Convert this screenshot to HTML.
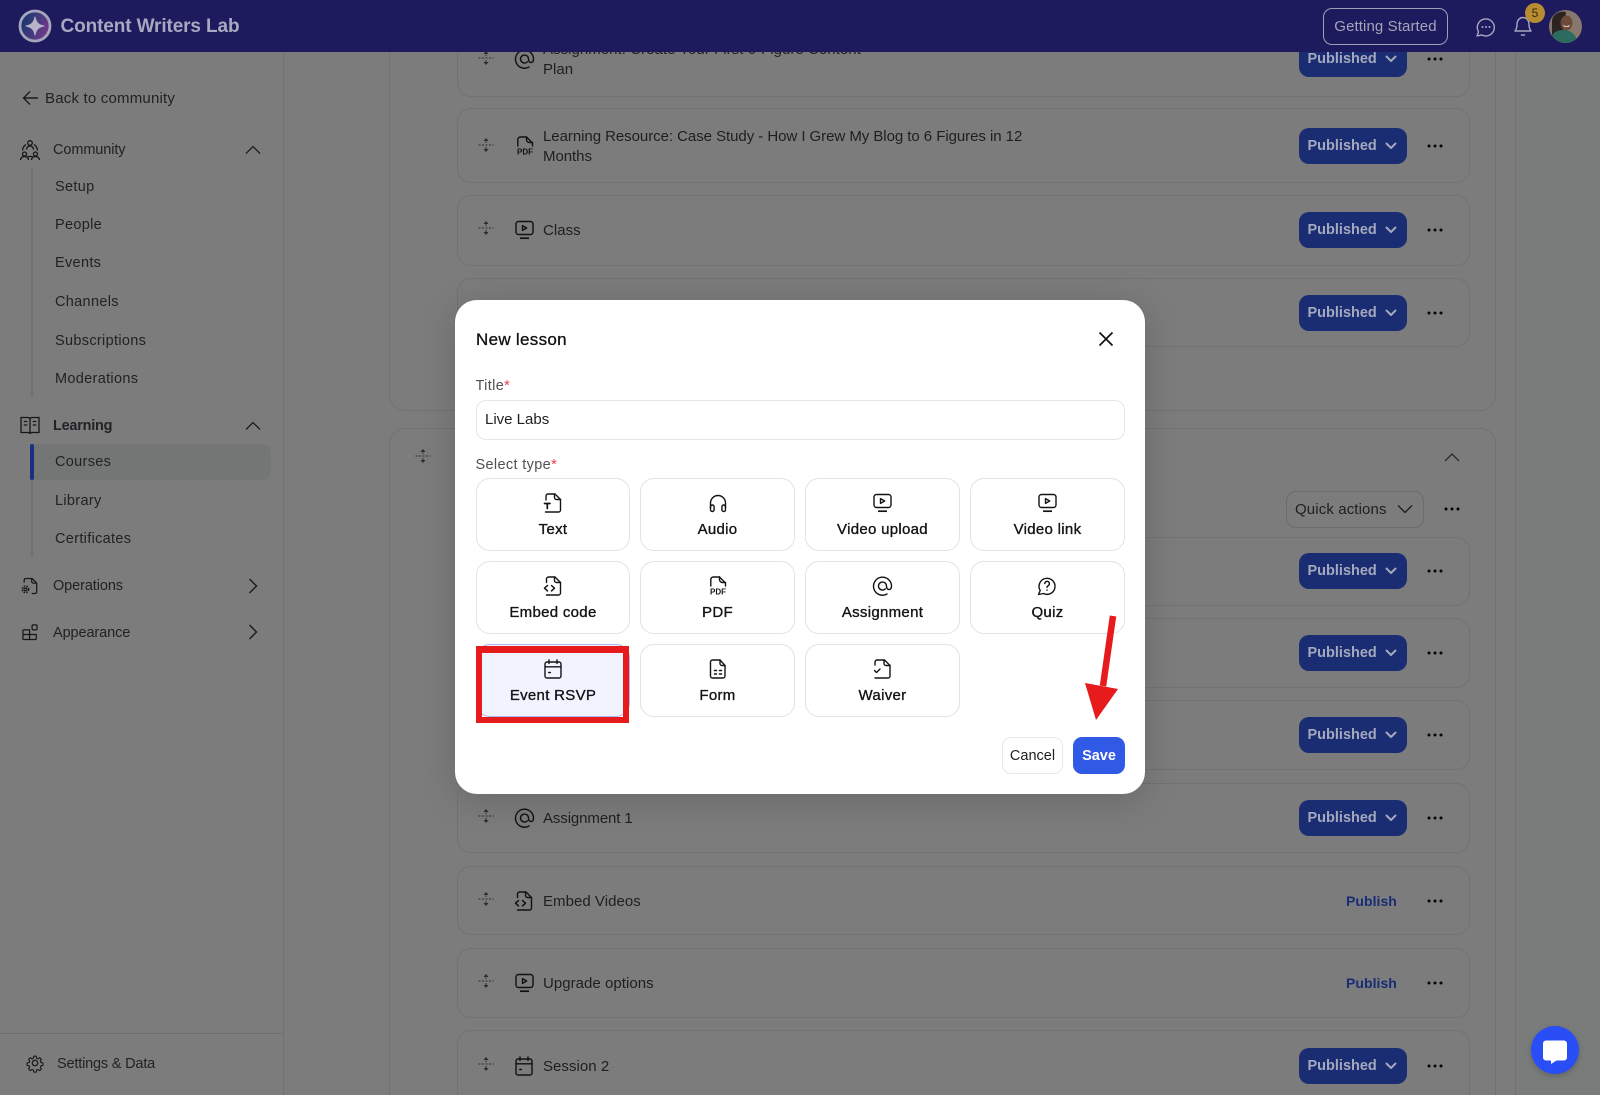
<!DOCTYPE html>
<html lang="en"><head><meta charset="utf-8"><title>New lesson</title>
<style>
*{box-sizing:border-box;margin:0;padding:0}
html,body{width:1600px;height:1095px;overflow:hidden;background:#7c7c7c;font-family:"Liberation Sans",sans-serif}
.a{position:absolute}
#page{position:relative;width:1600px;height:1095px;overflow:hidden;background:#7c7c7c}
#rightpane{left:1515px;top:52px;width:85px;height:1043px;background:#7a7c7c;border-left:1px solid #727272}
#side{left:0;top:52px;width:284px;height:1043px;background:#7c7c7c;border-right:1px solid #727272}
.sec{border:1px solid #727272;border-radius:16px}
.card{position:absolute;left:457px;width:1013px;border:1px solid #727272;border-radius:14px}
.r{position:absolute;left:0;width:1600px;height:0}
.r>*{position:absolute}
.r .d{left:478px;top:-12px;color:#2c2c2e}
.r .i{left:512.500px;top:-12px;color:#111}
.r .t{left:543px;top:-9px;font-size:15px;line-height:20px;color:#1f1f22;letter-spacing:.04px;white-space:nowrap}
.r .p{left:1299px;top:-18px;width:108px;height:36px;border-radius:10px;background:#1a2c72;color:#a4a9bd;font-size:14.500px;font-weight:700;line-height:37px;padding-left:8.500px}
.r .p svg{position:absolute;left:86px;top:12px}
.r .u{left:1346px;top:-10px;font-size:14px;line-height:20px;font-weight:700;color:#182c76;letter-spacing:.05px}
.r .m{left:1427px;top:-2px}
.s{position:absolute;font-size:15px;line-height:20px;color:#222226;white-space:nowrap;letter-spacing:.32px}
.h{letter-spacing:-.1px}
#modal{left:455px;top:300px;width:690px;height:494px;background:#fff;border-radius:22px;box-shadow:0 6px 40px rgba(0,0,0,.16)}
.o{position:absolute;width:155px;height:73px;border:1px solid #e1e2e6;border-radius:14px;background:#fff;color:#141416}
.o svg{position:absolute;left:65px;top:12px}
.o b{position:absolute;left:0;right:0;top:41px;text-align:center;font-size:15px;line-height:20px;font-weight:400;letter-spacing:.3px;-webkit-text-stroke:.35px #141416}
</style></head><body>
<svg width="0" height="0" style="position:absolute">
<defs>
<symbol id="video" viewBox="0 0 24 24"><g fill="none" stroke="currentColor" stroke-width="1.4" stroke-linejoin="round" transform="translate(-.5 0)"><rect x="3.500" y="3.500" width="17" height="13" rx="2.500"/><path d="M10 7.600v4.800l4.200-2.400z"/><path d="M7.500 20.200h9" stroke-width="1.700"/></g></symbol>
<symbol id="at" viewBox="0 0 24 24"><g fill="none" stroke="currentColor" stroke-width="1.4" stroke-linecap="round"><path d="M16.500 20a9 9 0 1 1 4.500-8c0 2.200-1 3.500-2.500 3.500S16 14.200 16 12a4 4 0 1 0-1.200 2.900" transform="translate(-.5 0)"/></g></symbol>
<symbol id="quiz" viewBox="0 0 24 24"><g fill="none" stroke="currentColor" stroke-width="1.4" stroke-linecap="round" stroke-linejoin="round" transform="translate(-1 0)"><path d="M3.500 20.500l1.700-4a8 8 0 1 1 3.300 3z"/><path d="M9.800 9.600a2.300 2.300 0 1 1 3.500 2c-.9.500-1.300 1-1.300 1.800"/><path d="M12 16v.1"/></g></symbol>
<symbol id="cal" viewBox="0 0 24 24"><g fill="none" stroke="currentColor" stroke-width="1.4" stroke-linecap="round" transform="translate(-1 0)"><rect x="4" y="5" width="16" height="16" rx="2"/><path d="M4 9.800h16M8 3v3.500M16 3v3.500"/><path d="M7.800 15.500h1.500" stroke-width="1.600"/></g></symbol>
<symbol id="text" viewBox="0 0 24 24"><g fill="none" stroke="currentColor" stroke-width="1.4" stroke-linecap="round" stroke-linejoin="round" transform="translate(-1.500 0)"><path d="M5.500 9V5a2 2 0 0 1 2-2h7l5.500 5.500V19a2 2 0 0 1-2 2H5"/><path d="M14 3v3.500a2 2 0 0 0 2 2h4"/><path d="M4 12.500h5.500M6.800 12.500v5" stroke-width="1.700"/></g></symbol>
<symbol id="audio" viewBox="0 0 24 24"><g fill="none" stroke="currentColor" stroke-width="1.4"><path d="M4.500 17v-5a7.500 7.500 0 0 1 15 0v5"/><rect x="4.500" y="14" width="3.600" height="6.500" rx="1.800"/><rect x="15.900" y="14" width="3.600" height="6.500" rx="1.800"/></g></symbol>
<symbol id="code" viewBox="0 0 24 24"><g fill="none" stroke="currentColor" stroke-width="1.4" stroke-linecap="round" stroke-linejoin="round" transform="translate(-1.500 0)"><path d="M6 8.500V5a2 2 0 0 1 2-2h6.500L20 8.500V19a2 2 0 0 1-2 2H6"/><path d="M14 3v3.500a2 2 0 0 0 2 2h4"/><path d="M7 11.500l-3 2.700 3 2.700M11 11.500l3 2.700-3 2.700" stroke-width="1.500"/></g></symbol>
<symbol id="pdf" viewBox="0 0 24 24"><g fill="none" stroke="currentColor" stroke-width="1.4" stroke-linecap="round" stroke-linejoin="round"><path d="M4.800 12V5.500a2.500 2.500 0 0 1 2.500-2.500h6.200l6 6v3"/><path d="M13.500 3v2.500a3 3 0 0 0 3 3h3"/></g><text x="12" y="20.500" text-anchor="middle" font-family="Liberation Sans" font-weight="700" font-size="8" fill="currentColor">PDF</text></symbol>
<symbol id="form" viewBox="0 0 24 24"><g fill="none" stroke="currentColor" stroke-width="1.4" stroke-linecap="round" stroke-linejoin="round"><path d="M6.500 3h7.500l5 5.500V19a2 2 0 0 1-2 2H6.500a2 2 0 0 1-2-2V5a2 2 0 0 1 2-2z"/><path d="M14 3v3.500a2 2 0 0 0 2 2h3"/><path d="M8.500 13.500h2M13.500 13.500h2M8.500 17h2M13.500 17h2" stroke-width="1.500"/></g></symbol>
<symbol id="waiver" viewBox="0 0 24 24"><g fill="none" stroke="currentColor" stroke-width="1.4" stroke-linecap="round" stroke-linejoin="round" transform="translate(-1 0)"><path d="M5 8V5a2 2 0 0 1 2-2h7.500l5.500 5.500V19a2 2 0 0 1-2 2H5"/><path d="M14 3v3.500a2 2 0 0 0 2 2h4"/><path d="M4.500 13.500l2 2 3.500-3.500"/></g></symbol>
<symbol id="drag" viewBox="0 0 16 16"><g fill="none" stroke="currentColor" stroke-width="1"><path d="M.5 8h15" stroke-dasharray="2 1.500"/><path d="M8 4.500v1.500M8 10v3" /></g><path d="M8 1l2.500 3h-5zM8 15l-2.500-3h5z" fill="currentColor"/></symbol>
<symbol id="dots" viewBox="0 0 16 4"><circle cx="2" cy="2" r="1.500" fill="#050505"/><circle cx="8" cy="2" r="1.500" fill="#050505"/><circle cx="14" cy="2" r="1.500" fill="#050505"/></symbol>
<symbol id="vw" viewBox="0 0 12 12"><path d="M1.500 3.500l4.500 4.500 4.500-4.500" fill="none" stroke="currentColor" stroke-width="2" stroke-linecap="round" stroke-linejoin="round"/></symbol>
</defs>
</svg>
<div id="page">
<div class="a" id="rightpane"></div>
<div class="a sec" style="left:389px;top:-40px;width:1107px;height:451px"></div>
<div class="a sec" style="left:389px;top:428px;width:1107px;height:720px"></div>

<div class="card" style="top:20px;height:77px"></div>
<div class="card" style="top:108px;height:75px"></div>
<div class="card" style="top:195px;height:71px"></div>
<div class="card" style="top:278px;height:69px"></div>
<div class="card" style="top:537px;height:69px"></div>
<div class="card" style="top:618px;height:70px"></div>
<div class="card" style="top:700px;height:70px"></div>
<div class="card" style="top:783px;height:70px"></div>
<div class="card" style="top:866px;height:69px"></div>
<div class="card" style="top:948px;height:70px"></div>
<div class="card" style="top:1030px;height:90px"></div>

<div class="r" style="top:59px"><svg class="d" width="16" height="16" style="top:-9px"><use href="#drag"/></svg><svg class="i" width="24" height="24" style="top:-12px"><use href="#at"/></svg><span class="t" style="top:-19px">Assignment: Create Your First 6-Figure Content<br>Plan</span><div class="p">Published<svg width="12" height="12"><use href="#vw"/></svg></div><svg class="m" width="16" height="4"><use href="#dots"/></svg></div>
<div class="r" style="top:146px"><svg class="d" width="16" height="16" style="top:-9px"><use href="#drag"/></svg><svg class="i" width="24" height="24"><use href="#pdf"/></svg><span class="t" style="top:-19.500px;letter-spacing:-.05px">Learning Resource: Case Study - How I Grew My Blog to 6 Figures in 12<br>Months</span><div class="p">Published<svg width="12" height="12"><use href="#vw"/></svg></div><svg class="m" width="16" height="4"><use href="#dots"/></svg></div>
<div class="r" style="top:230px"><svg class="d" width="16" height="16" style="top:-10px"><use href="#drag"/></svg><svg class="i" width="24" height="24"><use href="#video"/></svg><span class="t">Class</span><div class="p">Published<svg width="12" height="12"><use href="#vw"/></svg></div><svg class="m" width="16" height="4"><use href="#dots"/></svg></div>
<div class="r" style="top:312.500px"><div class="p">Published<svg width="12" height="12"><use href="#vw"/></svg></div><svg class="m" width="16" height="4"><use href="#dots"/></svg></div>

<svg class="a" width="16" height="16" style="left:415px;top:448px;color:#2c2c2e"><use href="#drag"/></svg>
<svg class="a" width="16" height="10" viewBox="0 0 16 10" style="left:1444px;top:452px"><path d="M1 9l7-7 7 7" fill="none" stroke="#2a2a2a" stroke-width="1.300"/></svg>
<div class="a" style="left:1286px;top:491px;width:138px;height:37px;border:1px solid #6b6b6b;border-radius:10px;font-size:15px;line-height:36px;padding-left:8px;color:#1f1f22;letter-spacing:.12px">Quick actions<svg style="position:absolute;left:110px;top:11px" width="16" height="12" viewBox="0 0 16 12"><path d="M1 2.500l7 7 7-7" fill="none" stroke="#1a1a1a" stroke-width="1.300"/></svg></div>
<svg class="a" width="16" height="4" style="left:1444px;top:507px"><use href="#dots"/></svg>

<div class="r" style="top:570.500px"><div class="p">Published<svg width="12" height="12"><use href="#vw"/></svg></div><svg class="m" width="16" height="4"><use href="#dots"/></svg></div>
<div class="r" style="top:653px"><div class="p">Published<svg width="12" height="12"><use href="#vw"/></svg></div><svg class="m" width="16" height="4"><use href="#dots"/></svg></div>
<div class="r" style="top:735px"><div class="p">Published<svg width="12" height="12"><use href="#vw"/></svg></div><svg class="m" width="16" height="4"><use href="#dots"/></svg></div>
<div class="r" style="top:818px"><svg class="d" width="16" height="16" style="top:-10px"><use href="#drag"/></svg><svg class="i" width="24" height="24"><use href="#at"/></svg><span class="t" style="letter-spacing:-.1px">Assignment 1</span><div class="p">Published<svg width="12" height="12"><use href="#vw"/></svg></div><svg class="m" width="16" height="4"><use href="#dots"/></svg></div>
<div class="r" style="top:900.700px"><svg class="d" width="16" height="16" style="top:-10px"><use href="#drag"/></svg><svg class="i" width="24" height="24"><use href="#code"/></svg><span class="t">Embed Videos</span><span class="u">Publish</span><svg class="m" width="16" height="4"><use href="#dots"/></svg></div>
<div class="r" style="top:983px"><svg class="d" width="16" height="16" style="top:-10px"><use href="#drag"/></svg><svg class="i" width="24" height="24"><use href="#video"/></svg><span class="t">Upgrade options</span><span class="u">Publish</span><svg class="m" width="16" height="4"><use href="#dots"/></svg></div>
<div class="r" style="top:1065.500px"><svg class="d" width="16" height="16" style="top:-10px"><use href="#drag"/></svg><svg class="i" width="24" height="24"><use href="#cal"/></svg><span class="t">Session 2</span><div class="p">Published<svg width="12" height="12"><use href="#vw"/></svg></div><svg class="m" width="16" height="4"><use href="#dots"/></svg></div>

<!-- sidebar -->
<div class="a" id="side"></div>
<svg class="a" width="18" height="16" viewBox="0 0 18 16" style="left:22px;top:90px"><path d="M16 8H2M8 1.500L1.500 8 8 14.500" fill="none" stroke="#1d1d20" stroke-width="1.400"/></svg>
<div class="s" style="left:45px;top:88.500px;letter-spacing:.2px">Back to community</div>

<svg class="a" width="24" height="24" viewBox="0 0 24 24" style="left:18px;top:138px"><g fill="none" stroke="#17171a" stroke-width="1.300"><circle cx="12" cy="5" r="2.300"/><path d="M8.500 11.500c0-2 1.500-3.500 3.500-3.500s3.500 1.500 3.500 3.500"/><circle cx="6.500" cy="16" r="2"/><circle cx="17.500" cy="16" r="2"/><path d="M2.500 22c0-2 1.700-3.500 4-3.500s4 1.500 4 3.500M13.500 22c0-2 1.700-3.500 4-3.500s4 1.500 4 3.500"/><path d="M8 6.500a8 8 0 0 0-3.500 6M16 6.500a8 8 0 0 1 3.500 6M9.500 18.500h5"/></g></svg>
<div class="s h" style="left:53px;top:140px;font-size:14.500px">Community</div>
<svg class="a" width="16" height="10" viewBox="0 0 16 10" style="left:245px;top:145px"><path d="M1 8.500l7-7 7 7" fill="none" stroke="#1d1d20" stroke-width="1.300"/></svg>
<div class="a" style="left:31px;top:168px;width:2px;height:229px;background:#707070"></div>
<div class="s" style="left:55px;top:177px;font-size:14.500px">Setup</div>
<div class="s" style="left:55px;top:215px;font-size:14.500px">People</div>
<div class="s" style="left:55px;top:253px;font-size:14.500px">Events</div>
<div class="s" style="left:55px;top:292px;font-size:14.500px">Channels</div>
<div class="s" style="left:55px;top:330.500px;font-size:14.500px">Subscriptions</div>
<div class="s" style="left:55px;top:369px;font-size:14.500px">Moderations</div>

<svg class="a" width="24" height="24" viewBox="0 0 24 24" style="left:18px;top:414px"><g fill="none" stroke="#17171a" stroke-width="1.300"><path d="M3 3.500h7c1.200 0 2 .8 2 2 0-1.200.8-2 2-2h7v15h-7c-1.200 0-2 .6-2 1.500-.0-.9-.8-1.500-2-1.500H3z"/><path d="M12 5.500V20M5.800 7.500h3.500M5.800 11h3.500M14.800 7.500h3.500M14.800 11h3.500"/></g></svg>
<div class="s" style="left:53px;top:416px;font-size:14.500px;font-weight:700;letter-spacing:-.25px">Learning</div>
<svg class="a" width="16" height="10" viewBox="0 0 16 10" style="left:245px;top:421px"><path d="M1 8.500l7-7 7 7" fill="none" stroke="#1d1d20" stroke-width="1.300"/></svg>
<div class="a" style="left:32px;top:444px;width:239px;height:36px;background:#747676;border-radius:0 8px 8px 0"></div>
<div class="a" style="left:31px;top:480px;width:2px;height:77px;background:#707070"></div>
<div class="a" style="left:30px;top:444px;width:4px;height:36px;background:#1b2f7e;border-radius:2px"></div>
<div class="s" style="left:55px;top:452px;font-size:14.500px">Courses</div>
<div class="s" style="left:55px;top:490.500px;font-size:14.500px">Library</div>
<div class="s" style="left:55px;top:529px;font-size:14.500px">Certificates</div>

<svg class="a" width="20" height="20" viewBox="0 0 24 24" style="left:20px;top:576px"><g fill="none" stroke="#17171a" stroke-width="1.500" stroke-linejoin="round"><path d="M5 8V5a2 2 0 0 1 2-2h7.500L20 8.500V19a2 2 0 0 1-2 2h-4"/><path d="M14 3v3.500a2 2 0 0 0 2 2h4"/><circle cx="6.500" cy="16" r="1.800"/><circle cx="6.500" cy="16" r="4" stroke-dasharray="2 1.300"/></g></svg>
<div class="s h" style="left:53px;top:576px;font-size:14.500px">Operations</div>
<svg class="a" width="10" height="16" viewBox="0 0 10 16" style="left:248px;top:578px"><path d="M1.500 1l7 7-7 7" fill="none" stroke="#1d1d20" stroke-width="1.500"/></svg>

<svg class="a" width="20" height="20" viewBox="0 0 24 24" style="left:20px;top:622px"><g fill="none" stroke="#17171a" stroke-width="1.500"><path d="M4.500 9.500h7v11.500h-7a1 1 0 0 1-1-1V10.500a1 1 0 0 1 1-1zM11.500 15h8v5a1 1 0 0 1-1 1h-7zM3.500 15h8"/><rect x="14.500" y="3.500" width="6" height="6" rx="1.500"/></g></svg>
<div class="s h" style="left:53px;top:623px;font-size:14.500px">Appearance</div>
<svg class="a" width="10" height="16" viewBox="0 0 10 16" style="left:248px;top:624px"><path d="M1.500 1l7 7-7 7" fill="none" stroke="#1d1d20" stroke-width="1.500"/></svg>

<div class="a" style="left:0;top:1033px;width:284px;height:1px;background:#6f6f6f"></div>
<svg class="a" width="20" height="20" viewBox="0 0 24 24" style="left:24.500px;top:1053px"><g fill="none" stroke="#17171a" stroke-width="1.500" stroke-linejoin="round"><circle cx="12" cy="12" r="3.300"/><path d="M10.300 2.500h3.400l.6 2.900 1.800.8 2.500-1.600 2.400 2.400-1.600 2.500.8 1.800 2.900.6v3.400l-2.900.6-.8 1.800 1.600 2.500-2.400 2.400-2.500-1.600-1.800.8-.6 2.900h-3.400l-.6-2.900-1.800-.8-2.500 1.600-2.400-2.400 1.600-2.500-.8-1.800-2.900-.6v-3.400l2.900-.6.8-1.800-1.600-2.500 2.400-2.400 2.500 1.600 1.800-.8z" transform="translate(1.700 1.700) scale(.86)"/></g></svg>
<div class="s" style="left:57px;top:1053.500px;font-size:14.500px;letter-spacing:-.18px">Settings &amp; Data</div>

<!-- header -->
<div class="a" style="left:0;top:0;width:1600px;height:52px;background:#1d1a5e">
<svg class="a" width="34" height="34" viewBox="0 0 34 34" style="left:17.500px;top:9px"><defs><linearGradient id="lg" x1="0" y1=".3" x2="1" y2=".7"><stop offset="0" stop-color="#12386e"/><stop offset="1" stop-color="#7a3b8c"/></linearGradient></defs><circle cx="17" cy="17" r="15" fill="url(#lg)" stroke="#a5a5bb" stroke-width="2.800"/><path d="M17 8c1 5.500 3.500 8 9 9-5.500 1-8 3.500-9 9-1-5.500-3.500-8-9-9 5.500-1 8-3.500 9-9z" fill="#b7b3cb" stroke="#b7b3cb" stroke-width="1" stroke-linejoin="round"/></svg>
<div class="a" style="left:60.500px;top:14px;font-size:19px;line-height:26px;font-weight:700;color:#a8a8c0;white-space:nowrap;letter-spacing:-.12px">Content Writers Lab</div>
<div class="a" style="left:1323px;top:8px;width:125px;height:37px;border:1px solid #9f9fb8;border-radius:9px;color:#a5a5ba;font-size:15px;line-height:36px;text-align:center;letter-spacing:.1px">Getting Started</div>
<svg class="a" width="22" height="22" viewBox="0 0 22 22" style="left:1475px;top:15.500px"><g fill="none" stroke="#a7a7bf" stroke-width="1.400" stroke-linejoin="round"><path d="M2 20l1.500-4.200a8.500 8.500 0 1 1 3.200 3.100z"/></g><circle cx="7.500" cy="11" r="1" fill="#a7a7bf"/><circle cx="11" cy="11" r="1" fill="#a7a7bf"/><circle cx="14.500" cy="11" r="1" fill="#a7a7bf"/></svg>
<svg class="a" width="20" height="22" viewBox="0 0 20 22" style="left:1513px;top:15px"><g fill="none" stroke="#a7a7bf" stroke-width="1.400" stroke-linejoin="round"><path d="M2 16c1.500-2 2-3.500 2-6.500C4 5.500 6.500 2.500 10 2.500s6 3 6 7c0 3 .5 4.500 2 6.500z"/><path d="M8 19.500c1 1 3 1 4 0"/></g></svg>
<div class="a" style="left:1525px;top:3px;width:20px;height:20px;border-radius:50%;background:#b88c30;color:#3a2a10;font-size:12px;line-height:20px;text-align:center">5</div>
<svg class="a" width="33" height="33" viewBox="0 0 33 33" style="left:1549px;top:10px"><defs><clipPath id="cp"><circle cx="16.500" cy="16.500" r="16.500"/></clipPath></defs><g clip-path="url(#cp)"><rect width="33" height="33" fill="#87786e"/><path d="M3 30V10c2-8 10-9 14-8l-4 28z" fill="#2b2320"/><ellipse cx="17.500" cy="13" rx="6" ry="7.500" fill="#6e4a3a"/><path d="M1 33c0-9 6-13 13-13s14 4 14 13z" fill="#2d6b60"/><path d="M14 14.500c2 2 5 2 7 0l-1 2.500h-5z" fill="#cfc5bc"/></g></svg>
</div>

<!-- modal -->
<div class="a" id="modal">
<div class="a" style="left:21px;top:29px;font-size:17px;line-height:22px;color:#111;letter-spacing:.3px;-webkit-text-stroke:.3px #111">New lesson</div>
<svg class="a" width="16" height="16" viewBox="0 0 16 16" style="left:643px;top:31px"><path d="M1.500 1.500l13 13M14.500 1.500l-13 13" stroke="#111" stroke-width="1.700" fill="none"/></svg>
<div class="a" style="left:20.500px;top:76px;font-size:14.500px;line-height:20px;color:#505055;letter-spacing:.35px">Title<span style="color:#e8414a">*</span></div>
<div class="a" style="left:21px;top:100px;width:649px;height:40px;border:1px solid #e4e5e8;border-radius:10px;font-size:15px;line-height:38.500px;padding-left:8px;color:#222;letter-spacing:0">Live Labs</div>
<div class="a" style="left:20.500px;top:155px;font-size:14.500px;line-height:20px;color:#505055;letter-spacing:.35px">Select type<span style="color:#e8414a">*</span></div>

<div class="o" style="left:21px;top:178px;width:154px"><svg width="24" height="24"><use href="#text"/></svg><b>Text</b></div>
<div class="o" style="left:185px;top:178px"><svg width="24" height="24"><use href="#audio"/></svg><b>Audio</b></div>
<div class="o" style="left:350px;top:178px"><svg width="24" height="24"><use href="#video"/></svg><b>Video upload</b></div>
<div class="o" style="left:515px;top:178px;width:155px"><svg width="24" height="24"><use href="#video"/></svg><b>Video link</b></div>
<div class="o" style="left:21px;top:261px;width:154px"><svg width="24" height="24"><use href="#code"/></svg><b>Embed code</b></div>
<div class="o" style="left:185px;top:261px"><svg width="24" height="24"><use href="#pdf"/></svg><b>PDF</b></div>
<div class="o" style="left:350px;top:261px"><svg width="24" height="24"><use href="#at"/></svg><b>Assignment</b></div>
<div class="o" style="left:515px;top:261px;width:155px"><svg width="24" height="24"><use href="#quiz"/></svg><b>Quiz</b></div>
<div class="o" style="left:21px;top:344px;width:154px;background:#f1f3fe;border-color:#a9b6f0"><svg width="24" height="24"><use href="#cal"/></svg><b>Event RSVP</b></div>
<div class="o" style="left:185px;top:344px"><svg width="24" height="24"><use href="#form"/></svg><b>Form</b></div>
<div class="o" style="left:350px;top:344px"><svg width="24" height="24"><use href="#waiver"/></svg><b>Waiver</b></div>

<div class="a" style="left:547px;top:437px;width:61px;height:37px;border:1px solid #e8e8ea;border-radius:9px;font-size:14.500px;line-height:36px;text-align:center;color:#222;letter-spacing:0">Cancel</div>
<div class="a" style="left:618px;top:437px;width:52px;height:37px;border-radius:9px;background:#3059e6;font-size:14.500px;line-height:38px;text-align:center;color:#fff;font-weight:700">Save</div>
</div>

<!-- annotations -->
<div class="a" style="left:475.500px;top:646px;width:153.500px;height:77px;border:solid #e71a1c;border-width:7px 6px 6px 6px"></div>
<svg class="a" width="60" height="120" viewBox="0 0 60 120" style="left:1075px;top:610px"><path d="M38 6L28 76" stroke="#e71a1c" stroke-width="6.500" fill="none"/><path d="M10 73l33 6-22 31z" fill="#e71a1c"/></svg>

<!-- chat widget -->
<div class="a" style="left:1531px;top:1026px;width:48px;height:48px;border-radius:50%;background:#2a4ef5;box-shadow:0 2px 6px rgba(0,0,0,.2)"></div>
<svg class="a" width="26" height="26" viewBox="0 0 26 26" style="left:1542px;top:1039px"><path d="M4 1.500h18a3 3 0 0 1 3 3v14a3 3 0 0 1-3 3h-7.500L9 25v-3.500H4a3 3 0 0 1-3-3v-14a3 3 0 0 1 3-3z" fill="#fff"/></svg>
</div>
</body></html>
